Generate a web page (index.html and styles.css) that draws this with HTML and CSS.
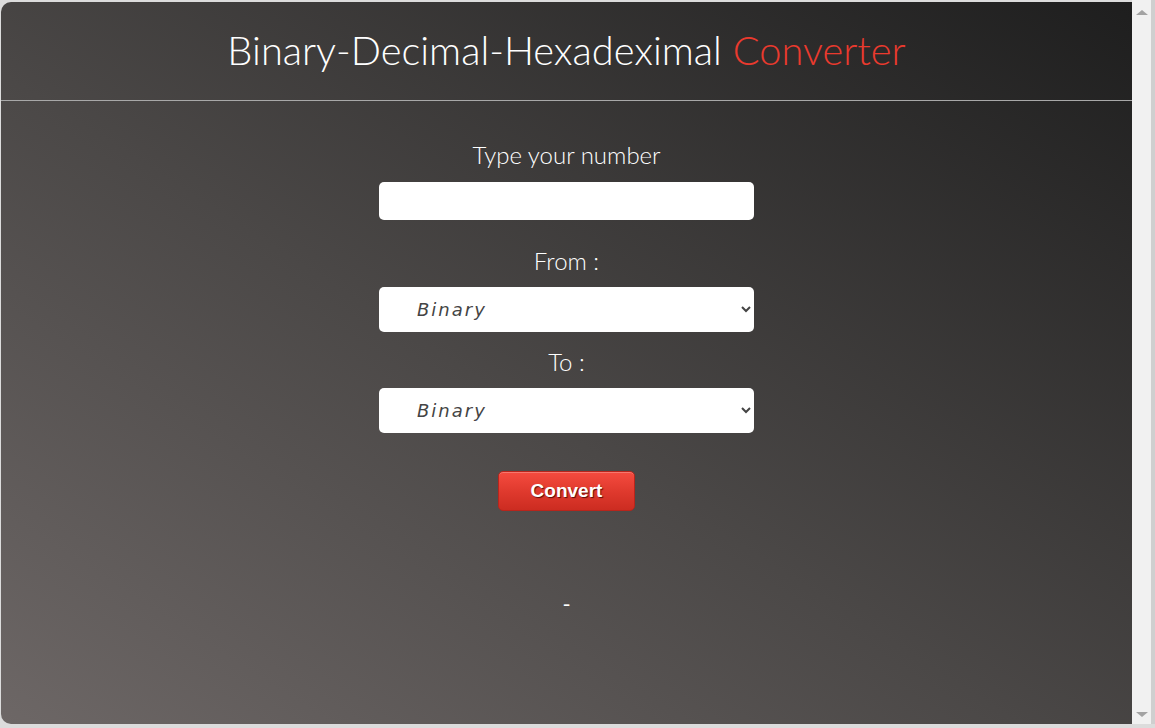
FILE: index.html
```html
<!DOCTYPE html>
<html lang="en">
<head>
<meta charset="utf-8">
<title>Binary-Decimal-Hexadeximal Converter</title>
<link rel="stylesheet" href="styles.css">
</head>
<body>
<div class="frame">
  <div class="app">
    <header class="app-header">
      <h1 class="title">Binary-Decimal-Hexadeximal <span class="accent">Converter</span></h1>
    </header>
    <main class="converter">
      <label class="field-label label-number" for="num">Type your number</label>
      <input class="text-input" id="num" type="text">
      <label class="field-label label-from" for="from">From :</label>
      <select class="base-select" id="from">
        <option>Binary</option>
        <option>Decimal</option>
        <option>Hexadecimal</option>
      </select>
      <label class="field-label label-to" for="to">To :</label>
      <select class="base-select" id="to">
        <option>Binary</option>
        <option>Decimal</option>
        <option>Hexadecimal</option>
      </select>
      <button class="convert-btn" type="button">Convert</button>
      <div class="result">-</div>
    </main>
  </div>
  <div class="scrollbar" aria-hidden="true">
    <span class="arrow arrow-up"></span>
    <span class="arrow arrow-down"></span>
  </div>
</div>
</body>
</html>
```

FILE: styles.css
```css
html {
  background: #dcdcdc;
}
body {
  margin: 0;
  padding: 2px 0 0 1px;
  background: #dcdcdc;
  font-family: "Lato Light", "Lato", "Open Sans", sans-serif;
  overflow: hidden;
}
.frame {
  display: flex;
  height: 722px;
}
.app {
  flex: 1;
  height: 722px;
  border-radius: 10px 0 0 10px;
  background: linear-gradient(to top right, #6d6766 0%, #4b4847 45%, #1e1e1e 100%);
  color: #fff;
  overflow: hidden;
}
.scrollbar {
  width: 23px;
  height: 726px;
  margin-top: -2px;
  background: #f1f1f1;
  border-right: 4px solid #cfcfcf;
  display: flex;
  flex-direction: column;
  justify-content: space-between;
  align-items: center;
  padding: 10px 0 9px;
  box-sizing: border-box;
  flex-shrink: 0;
}
.arrow {
  width: 0;
  height: 0;
  border-left: 6px solid transparent;
  border-right: 6px solid transparent;
}
.arrow-up {
  border-bottom: 5px solid #a3a3a3;
}
.arrow-down {
  border-top: 5px solid #a3a3a3;
}
.app-header {
  height: 98px;
  border-bottom: 1px solid #a8a8a8;
  display: flex;
  align-items: center;
  justify-content: center;
}
.title {
  margin: 0;
  font-family: "Lato Light", "Lato", sans-serif;
  font-weight: 300;
  font-size: 39.8px;
  line-height: 48px;
  color: #fff;
  padding-bottom: 2px;
}
.accent {
  color: #ea3a2e;
}
.converter {
  display: flex;
  flex-direction: column;
  align-items: center;
  padding-top: 40px;
}
.field-label {
  font-family: "Lato Light", "Lato", sans-serif;
  font-weight: 300;
  font-size: 24px;
  line-height: 28px;
  color: #fff;
}
.text-input {
  margin-top: 13px;
  width: 375px;
  height: 38px;
  box-sizing: border-box;
  border: none;
  border-radius: 5px;
  background: #fff;
  outline: none;
}
.label-from {
  margin-top: 27px;
}
.label-to {
  margin-top: 16px;
}
.base-select {
  margin-top: 12px;
  width: 375px;
  height: 45px;
  box-sizing: border-box;
  border: none;
  border-radius: 5px;
  background-color: #fff;
  padding: 0 8px 0 34px;
  font-family: "DejaVu Sans", sans-serif;
  font-style: italic;
  font-size: 18px;
  letter-spacing: 2px;
  color: #444;
}
.convert-btn {
  margin-top: 38px;
  width: 137px;
  height: 40px;
  box-sizing: border-box;
  border: 1px solid #b8251c;
  border-radius: 5px;
  background: linear-gradient(to bottom, #f54b3f 0%, #e03a2e 50%, #cc2c21 100%);
  box-shadow: inset 0 1px 0 rgba(255, 255, 255, 0.25);
  color: #fff;
  font-family: "Liberation Sans", Arial, sans-serif;
  font-weight: bold;
  font-size: 19px;
  text-shadow: 1px 1px 1px #5a0c07;
  cursor: pointer;
}
.result {
  margin-top: 79px;
  font-family: "Lato", sans-serif;
  font-size: 22px;
  line-height: 28px;
  color: #fff;
}
```
